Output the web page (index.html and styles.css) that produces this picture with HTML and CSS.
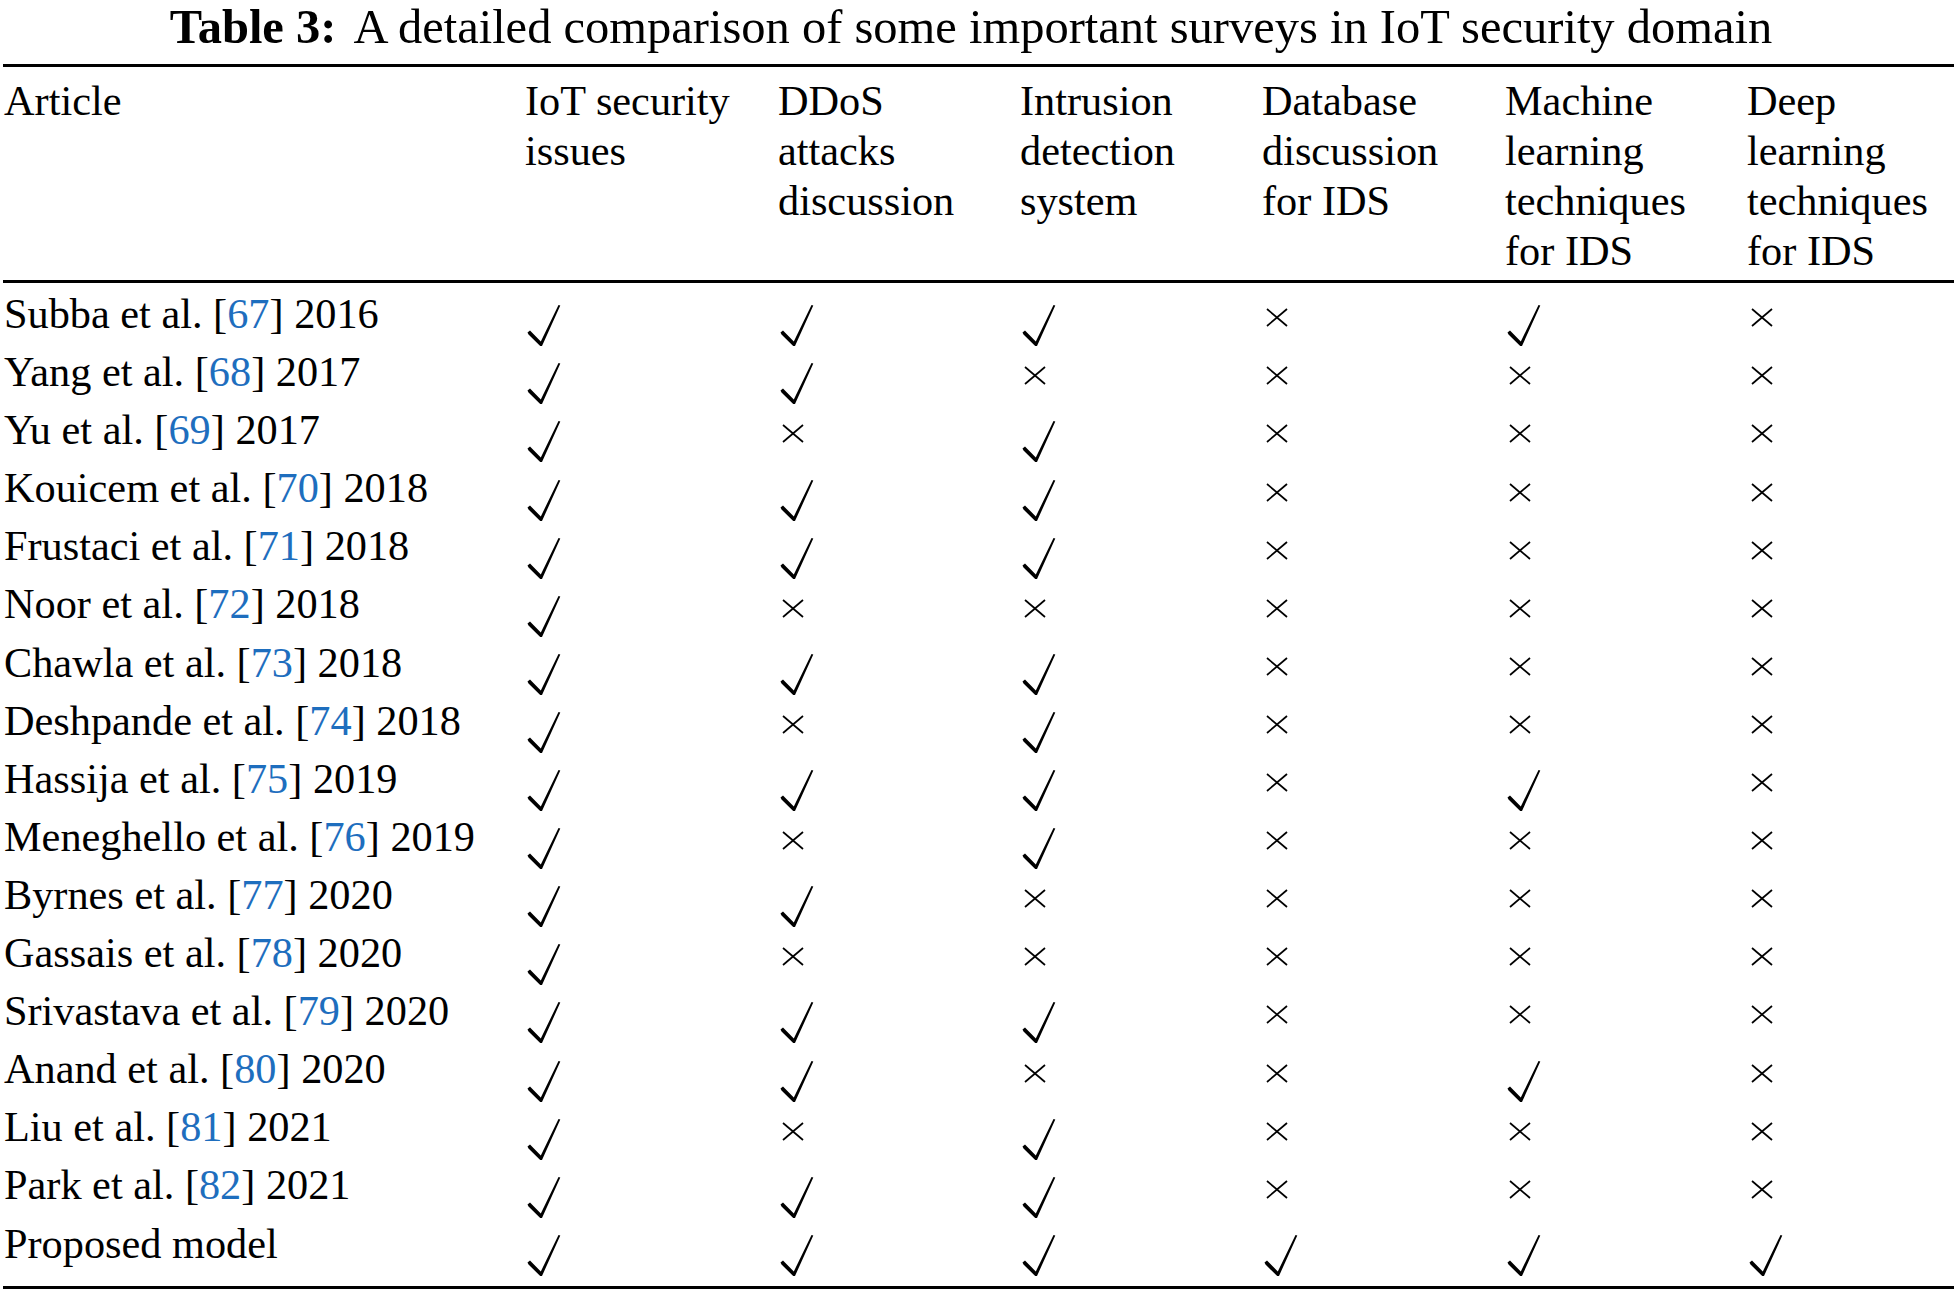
FILE: index.html
```html
<!DOCTYPE html>
<html lang="en">
<head>
<meta charset="utf-8">
<title>Table 3</title>
<link rel="stylesheet" href="styles.css">
</head>
<body>
<svg class="defs" aria-hidden="true">
  <symbol id="check" viewBox="0 0 34 42">
    <polygon points="0.5,27.5 3,25.5 13.8,36.5 31.5,0 33.3,0.6 15,41 13.2,41 1.5,29.5" fill="#000"/>
  </symbol>
  <symbol id="cross" viewBox="0 0 22 19">
    <line x1="1" y1="1" x2="21" y2="18" stroke="#000" stroke-width="1.7"/>
    <line x1="21" y1="1" x2="1" y2="18" stroke="#000" stroke-width="1.7"/>
  </symbol>
</svg>
<div class="caption"><span class="cap-label">Table 3:</span>A detailed comparison of some important surveys in IoT security domain</div>
<div class="tbl">
  <div class="row head">
    <div class="cell name">Article</div>
    <div class="cell hcell">IoT security issues</div>
    <div class="cell hcell">DDoS attacks discussion</div>
    <div class="cell hcell">Intrusion detection system</div>
    <div class="cell hcell">Database discussion for IDS</div>
    <div class="cell hcell">Machine learning techniques for IDS</div>
    <div class="cell hcell">Deep learning techniques for IDS</div>
  </div>
  <div class="body">
    <div class="row data">
      <div class="cell name">Subba et al. [<span class="ref">67</span>] 2016</div>
      <div class="cell"><svg class="ck"><use href="#check"/></svg></div>
      <div class="cell"><svg class="ck"><use href="#check"/></svg></div>
      <div class="cell"><svg class="ck"><use href="#check"/></svg></div>
      <div class="cell"><svg class="x"><use href="#cross"/></svg></div>
      <div class="cell"><svg class="ck"><use href="#check"/></svg></div>
      <div class="cell"><svg class="x"><use href="#cross"/></svg></div>
    </div>
    <div class="row data">
      <div class="cell name">Yang et al. [<span class="ref">68</span>] 2017</div>
      <div class="cell"><svg class="ck"><use href="#check"/></svg></div>
      <div class="cell"><svg class="ck"><use href="#check"/></svg></div>
      <div class="cell"><svg class="x"><use href="#cross"/></svg></div>
      <div class="cell"><svg class="x"><use href="#cross"/></svg></div>
      <div class="cell"><svg class="x"><use href="#cross"/></svg></div>
      <div class="cell"><svg class="x"><use href="#cross"/></svg></div>
    </div>
    <div class="row data">
      <div class="cell name">Yu et al. [<span class="ref">69</span>] 2017</div>
      <div class="cell"><svg class="ck"><use href="#check"/></svg></div>
      <div class="cell"><svg class="x"><use href="#cross"/></svg></div>
      <div class="cell"><svg class="ck"><use href="#check"/></svg></div>
      <div class="cell"><svg class="x"><use href="#cross"/></svg></div>
      <div class="cell"><svg class="x"><use href="#cross"/></svg></div>
      <div class="cell"><svg class="x"><use href="#cross"/></svg></div>
    </div>
    <div class="row data">
      <div class="cell name">Kouicem et al. [<span class="ref">70</span>] 2018</div>
      <div class="cell"><svg class="ck"><use href="#check"/></svg></div>
      <div class="cell"><svg class="ck"><use href="#check"/></svg></div>
      <div class="cell"><svg class="ck"><use href="#check"/></svg></div>
      <div class="cell"><svg class="x"><use href="#cross"/></svg></div>
      <div class="cell"><svg class="x"><use href="#cross"/></svg></div>
      <div class="cell"><svg class="x"><use href="#cross"/></svg></div>
    </div>
    <div class="row data">
      <div class="cell name">Frustaci et al. [<span class="ref">71</span>] 2018</div>
      <div class="cell"><svg class="ck"><use href="#check"/></svg></div>
      <div class="cell"><svg class="ck"><use href="#check"/></svg></div>
      <div class="cell"><svg class="ck"><use href="#check"/></svg></div>
      <div class="cell"><svg class="x"><use href="#cross"/></svg></div>
      <div class="cell"><svg class="x"><use href="#cross"/></svg></div>
      <div class="cell"><svg class="x"><use href="#cross"/></svg></div>
    </div>
    <div class="row data">
      <div class="cell name">Noor et al. [<span class="ref">72</span>] 2018</div>
      <div class="cell"><svg class="ck"><use href="#check"/></svg></div>
      <div class="cell"><svg class="x"><use href="#cross"/></svg></div>
      <div class="cell"><svg class="x"><use href="#cross"/></svg></div>
      <div class="cell"><svg class="x"><use href="#cross"/></svg></div>
      <div class="cell"><svg class="x"><use href="#cross"/></svg></div>
      <div class="cell"><svg class="x"><use href="#cross"/></svg></div>
    </div>
    <div class="row data">
      <div class="cell name">Chawla et al. [<span class="ref">73</span>] 2018</div>
      <div class="cell"><svg class="ck"><use href="#check"/></svg></div>
      <div class="cell"><svg class="ck"><use href="#check"/></svg></div>
      <div class="cell"><svg class="ck"><use href="#check"/></svg></div>
      <div class="cell"><svg class="x"><use href="#cross"/></svg></div>
      <div class="cell"><svg class="x"><use href="#cross"/></svg></div>
      <div class="cell"><svg class="x"><use href="#cross"/></svg></div>
    </div>
    <div class="row data">
      <div class="cell name">Deshpande et al. [<span class="ref">74</span>] 2018</div>
      <div class="cell"><svg class="ck"><use href="#check"/></svg></div>
      <div class="cell"><svg class="x"><use href="#cross"/></svg></div>
      <div class="cell"><svg class="ck"><use href="#check"/></svg></div>
      <div class="cell"><svg class="x"><use href="#cross"/></svg></div>
      <div class="cell"><svg class="x"><use href="#cross"/></svg></div>
      <div class="cell"><svg class="x"><use href="#cross"/></svg></div>
    </div>
    <div class="row data">
      <div class="cell name">Hassija et al. [<span class="ref">75</span>] 2019</div>
      <div class="cell"><svg class="ck"><use href="#check"/></svg></div>
      <div class="cell"><svg class="ck"><use href="#check"/></svg></div>
      <div class="cell"><svg class="ck"><use href="#check"/></svg></div>
      <div class="cell"><svg class="x"><use href="#cross"/></svg></div>
      <div class="cell"><svg class="ck"><use href="#check"/></svg></div>
      <div class="cell"><svg class="x"><use href="#cross"/></svg></div>
    </div>
    <div class="row data">
      <div class="cell name">Meneghello et al. [<span class="ref">76</span>] 2019</div>
      <div class="cell"><svg class="ck"><use href="#check"/></svg></div>
      <div class="cell"><svg class="x"><use href="#cross"/></svg></div>
      <div class="cell"><svg class="ck"><use href="#check"/></svg></div>
      <div class="cell"><svg class="x"><use href="#cross"/></svg></div>
      <div class="cell"><svg class="x"><use href="#cross"/></svg></div>
      <div class="cell"><svg class="x"><use href="#cross"/></svg></div>
    </div>
    <div class="row data">
      <div class="cell name">Byrnes et al. [<span class="ref">77</span>] 2020</div>
      <div class="cell"><svg class="ck"><use href="#check"/></svg></div>
      <div class="cell"><svg class="ck"><use href="#check"/></svg></div>
      <div class="cell"><svg class="x"><use href="#cross"/></svg></div>
      <div class="cell"><svg class="x"><use href="#cross"/></svg></div>
      <div class="cell"><svg class="x"><use href="#cross"/></svg></div>
      <div class="cell"><svg class="x"><use href="#cross"/></svg></div>
    </div>
    <div class="row data">
      <div class="cell name">Gassais et al. [<span class="ref">78</span>] 2020</div>
      <div class="cell"><svg class="ck"><use href="#check"/></svg></div>
      <div class="cell"><svg class="x"><use href="#cross"/></svg></div>
      <div class="cell"><svg class="x"><use href="#cross"/></svg></div>
      <div class="cell"><svg class="x"><use href="#cross"/></svg></div>
      <div class="cell"><svg class="x"><use href="#cross"/></svg></div>
      <div class="cell"><svg class="x"><use href="#cross"/></svg></div>
    </div>
    <div class="row data">
      <div class="cell name">Srivastava et al. [<span class="ref">79</span>] 2020</div>
      <div class="cell"><svg class="ck"><use href="#check"/></svg></div>
      <div class="cell"><svg class="ck"><use href="#check"/></svg></div>
      <div class="cell"><svg class="ck"><use href="#check"/></svg></div>
      <div class="cell"><svg class="x"><use href="#cross"/></svg></div>
      <div class="cell"><svg class="x"><use href="#cross"/></svg></div>
      <div class="cell"><svg class="x"><use href="#cross"/></svg></div>
    </div>
    <div class="row data">
      <div class="cell name">Anand et al. [<span class="ref">80</span>] 2020</div>
      <div class="cell"><svg class="ck"><use href="#check"/></svg></div>
      <div class="cell"><svg class="ck"><use href="#check"/></svg></div>
      <div class="cell"><svg class="x"><use href="#cross"/></svg></div>
      <div class="cell"><svg class="x"><use href="#cross"/></svg></div>
      <div class="cell"><svg class="ck"><use href="#check"/></svg></div>
      <div class="cell"><svg class="x"><use href="#cross"/></svg></div>
    </div>
    <div class="row data">
      <div class="cell name">Liu et al. [<span class="ref">81</span>] 2021</div>
      <div class="cell"><svg class="ck"><use href="#check"/></svg></div>
      <div class="cell"><svg class="x"><use href="#cross"/></svg></div>
      <div class="cell"><svg class="ck"><use href="#check"/></svg></div>
      <div class="cell"><svg class="x"><use href="#cross"/></svg></div>
      <div class="cell"><svg class="x"><use href="#cross"/></svg></div>
      <div class="cell"><svg class="x"><use href="#cross"/></svg></div>
    </div>
    <div class="row data">
      <div class="cell name">Park et al. [<span class="ref">82</span>] 2021</div>
      <div class="cell"><svg class="ck"><use href="#check"/></svg></div>
      <div class="cell"><svg class="ck"><use href="#check"/></svg></div>
      <div class="cell"><svg class="ck"><use href="#check"/></svg></div>
      <div class="cell"><svg class="x"><use href="#cross"/></svg></div>
      <div class="cell"><svg class="x"><use href="#cross"/></svg></div>
      <div class="cell"><svg class="x"><use href="#cross"/></svg></div>
    </div>
    <div class="row data">
      <div class="cell name">Proposed model</div>
      <div class="cell"><svg class="ck"><use href="#check"/></svg></div>
      <div class="cell"><svg class="ck"><use href="#check"/></svg></div>
      <div class="cell"><svg class="ck"><use href="#check"/></svg></div>
      <div class="cell"><svg class="ck"><use href="#check"/></svg></div>
      <div class="cell"><svg class="ck"><use href="#check"/></svg></div>
      <div class="cell"><svg class="ck"><use href="#check"/></svg></div>
    </div>
  </div>
</div>
</body>
</html>
```

FILE: styles.css
```css
body {
  margin: 0;
  background: #fff;
  color: #000;
  font-family: "Liberation Serif", "Times New Roman", serif;
}

.defs {
  display: block;
  width: 0;
  height: 0;
  overflow: hidden;
}

.caption {
  font-size: 48.5px;
  line-height: 54px;
  height: 54px;
  text-align: center;
  padding-right: 12px;
  white-space: nowrap;
}

.cap-label {
  font-weight: bold;
  margin-right: 17px;
}

.tbl {
  margin: 10px 0 0 3px;
  width: 1951px;
  font-size: 42.3px;
}

.row {
  display: grid;
  grid-template-columns: 522px 253px 242px 242px 243px 242px 207px;
}

.head {
  border-top: 3px solid #000;
  border-bottom: 3px solid #000;
  padding: 9px 0 4px;
  line-height: 50px;
}

.hcell {
  width: 212px;
}

.name {
  padding-left: 1px;
  white-space: nowrap;
}

.body {
  padding: 2px 0 13.3px;
  border-bottom: 3px solid #000;
}

.data {
  height: 58.1px;
  line-height: 58.1px;
}

.ref {
  color: #1e6ebe;
}

.ck {
  display: block;
  width: 34px;
  height: 42px;
  margin: 20.3px 0 0 2px;
}

.x {
  display: block;
  width: 22px;
  height: 19px;
  margin: 23.3px 0 0 4px;
}
```
